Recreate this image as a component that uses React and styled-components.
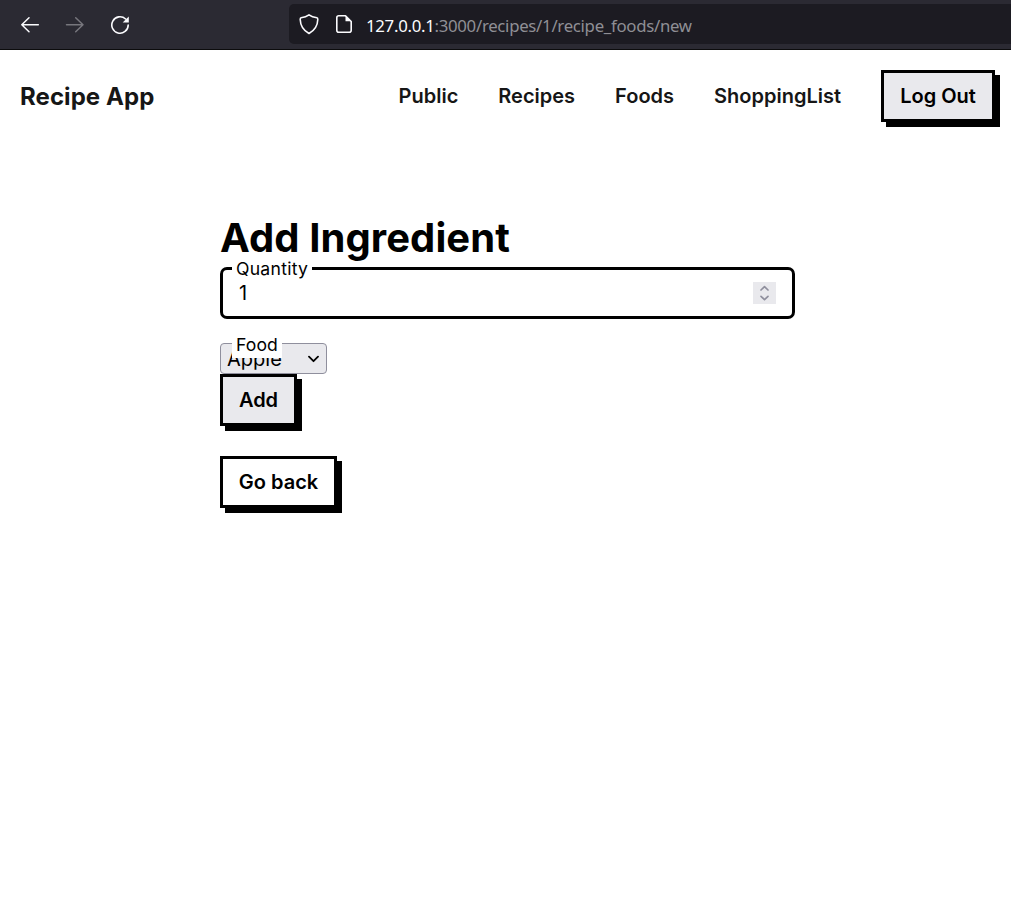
import React from 'react';
import styled, { createGlobalStyle } from 'styled-components';

const GlobalStyle = createGlobalStyle`
  * { box-sizing: border-box; }
  body { margin: 0; background: #fff; color: #000; font-family: Inter, "Liberation Sans", sans-serif; }
`;

const Toolbar = styled.div`
  display: flex;
  height: 50px;
  background: #2b2a33;
  border-bottom: 1px solid #0c0c0d;
  padding: 4px 0 5px 20px;
`;

const NavButtons = styled.div`
  display: flex;
  align-items: center;
  gap: 25px;
  width: 269px;
  padding-top: 1px;
  flex-shrink: 0;
  svg { display: block; }
`;

const AddressBar = styled.div`
  flex: 1;
  display: flex;
  align-items: center;
  height: 40px;
  background: #1c1b22;
  border-radius: 5px 0 0 5px;
  padding-left: 10px;
`;

const ShieldSlot = styled.span`
  display: flex;
  width: 35px;
`;

const PageSlot = styled.span`
  display: flex;
  width: 32px;
`;

const Url = styled.span`
  font: 16.8px/24px "Noto Sans", sans-serif;
  color: #8f8f95;
  white-space: nowrap;
  letter-spacing: -0.29px;
  padding-top: 3px;
`;

const Host = styled.span`
  color: #fbfbfe;
`;

const Header = styled.header`
  display: flex;
  align-items: center;
  justify-content: space-between;
  padding: 20px 16px 0 20px;
`;

const Brand = styled.a`
  padding-top: 2px;
  font-size: 24px;
  line-height: 30px;
  font-weight: 700;
  letter-spacing: 0.07px;
  color: #161616;
`;

const Nav = styled.nav`
  display: flex;
  align-items: center;
  gap: 40px;
`;

const NavLink = styled.a`
  font-size: 20px;
  line-height: 26px;
  font-weight: 600;
  color: #161616;
`;

const Button = styled.button`
  display: block;
  width: ${(p) => p.$width}px;
  height: 52px;
  padding: 0;
  border: 3px solid #000;
  border-radius: 0;
  background: ${(p) => (p.$plain ? '#fff' : '#e9e9ed')};
  box-shadow: 5px 5px 0 #000;
  color: #000;
  font: 600 20px/26px Inter, sans-serif;
  white-space: nowrap;
`;

const Main = styled.main`
  width: 575px;
  margin: 92px 0 0 220px;
`;

const Title = styled.h1`
  margin: 0;
  font-size: 40px;
  line-height: 48px;
  font-weight: 700;
  letter-spacing: 0.08px;
`;

const Field = styled.div`
  position: relative;
  margin-top: ${(p) => p.$gap}px;
`;

const Label = styled.label`
  position: absolute;
  left: 12px;
  top: -10px;
  padding: 0 4px 2px;
  background: #fff;
  font-size: 17.6px;
  line-height: 23px;
  letter-spacing: ${(p) => p.$tracking || 0}px;
`;

const NumberBox = styled.div`
  display: flex;
  align-items: center;
  justify-content: space-between;
  height: 52px;
  border: 3px solid #000;
  border-radius: 7px;
  padding: 0 16px;
  font-size: 20px;
`;

const Spinner = styled.span`
  display: flex;
  width: 23px;
  height: 22px;
  background: #e9e9ed;
`;

const SelectBox = styled.div`
  display: flex;
  align-items: center;
  justify-content: space-between;
  width: 107px;
  height: 31px;
  padding: 0 7px 0 6px;
  border: 1px solid #8f8f9d;
  border-radius: 4px;
  background: #e9e9ed;
  font-size: 20px;
  line-height: 24px;
`;

const Actions = styled.div`
  display: flex;
  flex-direction: column;
  gap: 30px;
  padding-bottom: 20px;
`;

const ArrowIcon = ({ right }) => (
  <svg width="20" height="20" viewBox="0 0 20 20" fill="none" stroke={right ? '#77767d' : '#fbfbfe'} strokeWidth="1.5" strokeLinecap="round" strokeLinejoin="round">
    <path d={right ? 'M1.5 9.7H18M10.7 2.7L18 9.7L10.7 16.7' : 'M18.3 9.7H1.8M9 2.7L1.8 9.7L9 16.7'} />
  </svg>
);

const ReloadIcon = () => (
  <svg width="20" height="20" viewBox="0 0 20 20" fill="none">
    <path d="M15.6 4A8.2 8.2 0 1 0 18.2 10" stroke="#fbfbfe" strokeWidth="1.6" strokeLinecap="round" />
    <path d="M18.8 1.4V7.5H12.7Z" fill="#fbfbfe" />
  </svg>
);

const ShieldIcon = () => (
  <svg width="20" height="22" viewBox="0 0 20 22" fill="none" stroke="#fbfbfe" strokeWidth="1.6" strokeLinejoin="round">
    <path d="M10 1.8C7.7 3.5 4.8 4.4 2.1 4.8C1.2 5 1.2 5.6 1.2 6.5C1.4 12.3 4.5 17.5 10 20.5C15.5 17.5 18.6 12.3 18.8 6.5C18.8 5.6 18.8 5 17.9 4.8C15.2 4.4 12.3 3.5 10 1.8Z" />
  </svg>
);

const PageIcon = () => (
  <svg width="20" height="20" viewBox="0 0 20 20" fill="none">
    <path d="M4.5 1.8H11.5L17.2 7.5V16.2A2 2 0 0 1 15.2 18.2H4.8A2 2 0 0 1 2.8 16.2V3.8A2 2 0 0 1 4.8 1.8Z" stroke="#fbfbfe" strokeWidth="1.6" strokeLinejoin="round" />
    <path d="M11.5 1.8V7.2H17.2Z" fill="#fbfbfe" />
  </svg>
);

const SpinnerIcon = () => (
  <svg width="23" height="22" viewBox="0 0 23 22" fill="none" stroke="#8f8f9d" strokeWidth="1.7" strokeLinecap="round" strokeLinejoin="round">
    <path d="M8 8L11.5 4.7L15 8M8 14.3L11.5 17.6L15 14.3" />
  </svg>
);

const ChevronIcon = () => (
  <svg width="12" height="10" viewBox="0 0 12 10" fill="none" stroke="#000" strokeWidth="1.8" strokeLinecap="round" strokeLinejoin="round">
    <path d="M2 2.7L6.5 7.2L11 2.7" />
  </svg>
);

export default function App() {
  return (
    <>
      <GlobalStyle />
      <Toolbar>
        <NavButtons>
          <ArrowIcon />
          <ArrowIcon right />
          <ReloadIcon />
        </NavButtons>
        <AddressBar>
          <ShieldSlot><ShieldIcon /></ShieldSlot>
          <PageSlot><PageIcon /></PageSlot>
          <Url><Host>127.0.0.1</Host>:3000/recipes/1/recipe_foods/new</Url>
        </AddressBar>
      </Toolbar>
      <Header>
        <Brand>Recipe App</Brand>
        <Nav>
          <NavLink>Public</NavLink>
          <NavLink>Recipes</NavLink>
          <NavLink>Foods</NavLink>
          <NavLink>ShoppingList</NavLink>
          <Button $width={114}>Log Out</Button>
        </Nav>
      </Header>
      <Main>
        <Title>Add Ingredient</Title>
        <Field $gap={5}>
          <NumberBox>
            1
            <Spinner><SpinnerIcon /></Spinner>
          </NumberBox>
          <Label $tracking={0.25}>Quantity</Label>
        </Field>
        <Field $gap={24}>
          <SelectBox>
            Apple
            <ChevronIcon />
          </SelectBox>
          <Label $tracking={0.1}>Food</Label>
        </Field>
        <Actions>
          <Button $width={77}>Add</Button>
          <Button $width={117} $plain>Go back</Button>
        </Actions>
      </Main>
    </>
  );
}
